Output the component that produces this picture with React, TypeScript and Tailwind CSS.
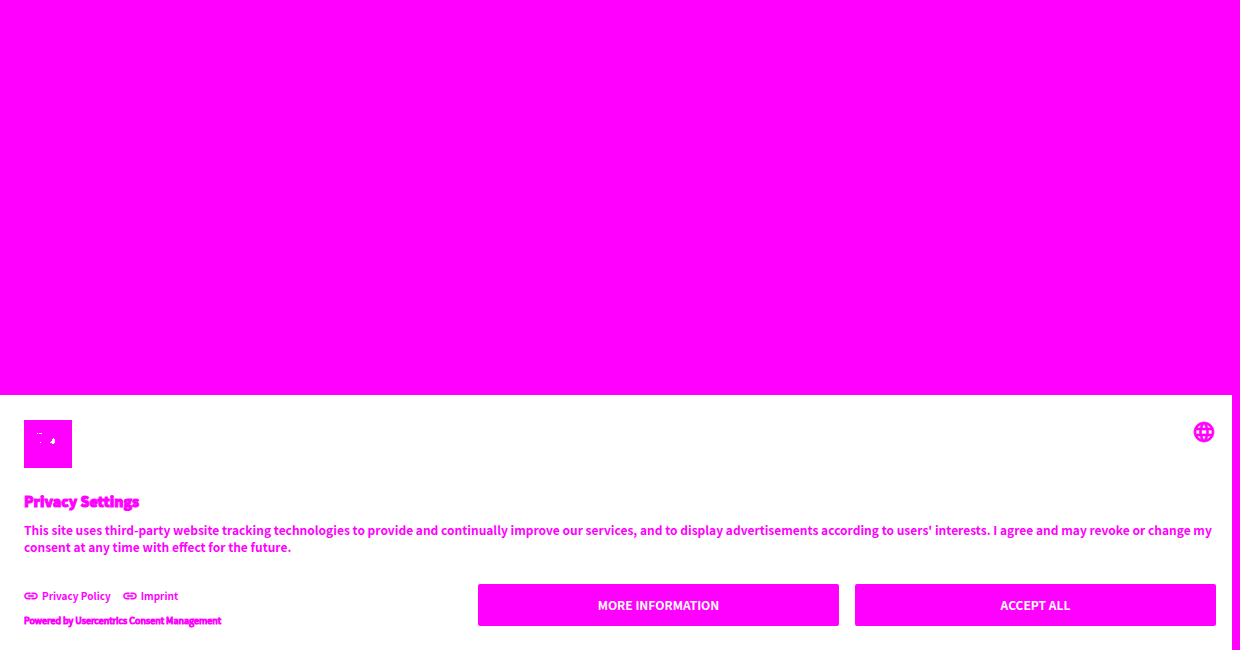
import type { ReactNode } from "react";
import { MdLanguage, MdLink } from "react-icons/md";

function FooterLink({ href, children }: { href: string; children: ReactNode }) {
  return (
    <a href={href} className="flex items-center gap-1">
      <MdLink
        className="-mx-px size-4 stroke-current stroke-[0.6] [&>path[fill=none]]:stroke-none"
        aria-hidden="true"
      />
      {children}
    </a>
  );
}

function ConsentButton({ children }: { children: ReactNode }) {
  return (
    <button
      type="button"
      className="h-[42px] flex-1 rounded-xs bg-[#ff00ff] text-xs font-bold text-white uppercase"
    >
      {children}
    </button>
  );
}

function Logo() {
  return (
    <svg viewBox="0 0 48 48" className="size-12" aria-hidden="true" shapeRendering="crispEdges">
      <path fill="#ff00ff" d="M0 0h48v48H0z" />
      <path
        fill="#fff"
        d="M13 13h1v1h-1zM15 13h3v1h-3zM16 22h1v1h-1zM29 18h1v1h1v4h-1v1h-2v-1h-2v-1h1v-1h1v-2h1z"
      />
    </svg>
  );
}

export default function App() {
  return (
    <div className="flex min-h-screen flex-col justify-end bg-[#ff00ff] pr-2 font-['Noto_Sans_CJK_SC',sans-serif] text-[#ff00ff]">
      <section aria-labelledby="privacy-title" className="bg-white pt-[25px] pr-4 pb-6 pl-6">
        <header className="flex items-start justify-between">
          <Logo />
          <button type="button" aria-label="Language">
            <MdLanguage className="size-6 stroke-current stroke-[0.6] [&>path[fill=none]]:stroke-none" />
          </button>
        </header>
        <h1 id="privacy-title" className="mt-[23px] text-sm leading-5 font-black [-webkit-text-stroke:1px]">
          Privacy Settings
        </h1>
        <p className="mt-2.5 text-xs leading-[17px] font-bold">
          This site uses third-party website tracking technologies to provide and continually improve our services, and
          to display advertisements according to users' interests. I agree and may revoke or change my consent at any
          time with effect for the future.
        </p>
        <div className="mt-[29px] flex items-end">
          <footer className="w-[454px] shrink-0">
            <nav className="flex gap-3 text-[10px] leading-4 font-bold">
              <FooterLink href="#privacy">Privacy Policy</FooterLink>
              <FooterLink href="#imprint">Imprint</FooterLink>
            </nav>
            <p className="mt-3 text-[9px] leading-[10px] font-normal [-webkit-text-stroke:1px]">
              Powered by Usercentrics Consent Management
            </p>
          </footer>
          <div className="flex flex-1 gap-4">
            <ConsentButton>More Information</ConsentButton>
            <ConsentButton>Accept All</ConsentButton>
          </div>
        </div>
      </section>
    </div>
  );
}
